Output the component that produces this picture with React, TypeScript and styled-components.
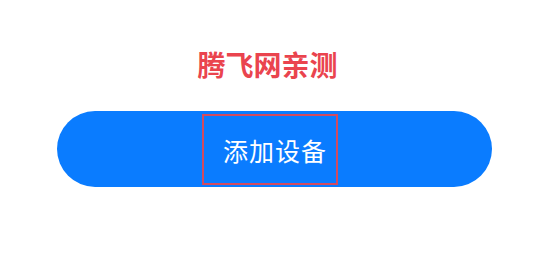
import React from "react";
import styled, { createGlobalStyle } from "styled-components";

const Global = createGlobalStyle`
  html, body { margin: 0; padding: 0; background: #ffffff; }
  body { font-family: "Noto Sans CJK SC", "Noto Sans", sans-serif; }
`;

const Page = styled.div`
  width: 550px;
  height: 275px;
  display: flex;
  flex-direction: column;
  align-items: center;
  padding-top: 46px;
  box-sizing: border-box;
`;

const Title = styled.h1`
  margin: 0 0 0 -15px;
  font-size: 28px;
  line-height: 36px;
  font-weight: 700;
  color: #ea444e;
  letter-spacing: 0;
`;

const Button = styled.button`
  margin-top: 29px;
  margin-left: -1px;
  width: 435px;
  height: 76px;
  border: none;
  border-radius: 38px;
  background: #0a7cff;
  display: flex;
  align-items: center;
  justify-content: center;
  padding: 0;
  font-family: inherit;
  cursor: pointer;
`;

const Highlight = styled.span`
  box-sizing: border-box;
  width: 136px;
  height: 71px;
  border: 2px solid #d24b60;
  display: flex;
  align-items: center;
  justify-content: center;
  margin-left: -10px;
  margin-top: 1px;
  padding-left: 11px;
  color: #ffffff;
  font-size: 25px;
  font-weight: 400;
  letter-spacing: 1px;
`;

export default function App() {
  return (
    <>
      <Global />
      <Page>
        <Title>腾飞网亲测</Title>
        <Button>
          <Highlight>添加设备</Highlight>
        </Button>
      </Page>
    </>
  );
}
